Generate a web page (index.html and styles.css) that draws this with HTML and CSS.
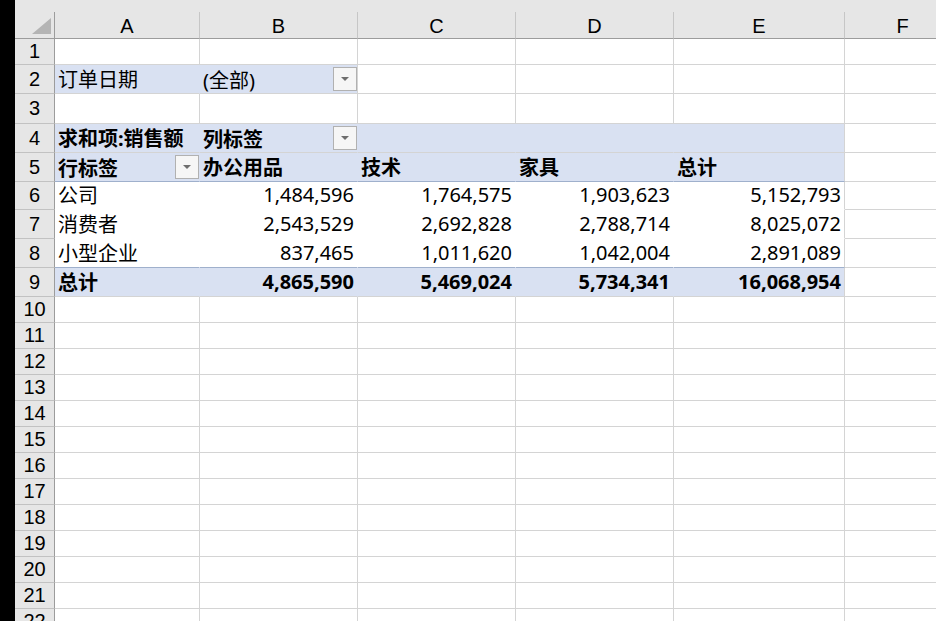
FILE: index.html
```html
<!DOCTYPE html>
<html lang="zh-CN">
<head>
    <meta charset="UTF-8">
    <title>数据透视表</title>
    <link rel="stylesheet" href="styles.css">
</head>
<body>
    <div class="app">
        <div class="strip"></div>

        <div class="sheet">
            <div class="topbar"></div>

            <!-- 列标题 -->
            <div class="row head">
                <div class="corner"><span class="tri"></span></div>
                <div>A</div><div>B</div><div>C</div><div>D</div><div>E</div><div>F</div>
            </div>

            <div class="row h26">
                <div class="rh">1</div><div></div><div></div><div></div><div></div><div></div><div></div>
            </div>

            <!-- 筛选字段 -->
            <div class="row h29">
                <div class="rh">2</div>
                <div class="pv join">订单日期</div>
                <div class="pv has-dd">(全部)<span class="dd"></span></div>
                <div></div><div></div><div></div><div></div>
            </div>

            <div class="row h30">
                <div class="rh">3</div><div></div><div></div><div></div><div></div><div></div><div></div>
            </div>

            <!-- 透视表 -->
            <div class="row h29">
                <div class="rh">4</div>
                <div class="pv join b">求和项:销售额</div>
                <div class="pv join b has-dd">列标签<span class="dd"></span></div>
                <div class="pv join"></div>
                <div class="pv join"></div>
                <div class="pv"></div>
                <div></div>
            </div>

            <div class="row h29">
                <div class="rh">5</div>
                <div class="pv join line b has-dd">行标签<span class="dd"></span></div>
                <div class="pv join line b">办公用品</div>
                <div class="pv join line b">技术</div>
                <div class="pv join line b">家具</div>
                <div class="pv line b">总计</div>
                <div></div>
            </div>

            <div class="row h28">
                <div class="rh">6</div>
                <div class="dt join">公司</div>
                <div class="dt join num">1,484,596</div>
                <div class="dt join num">1,764,575</div>
                <div class="dt join num">1,903,623</div>
                <div class="dt num">5,152,793</div>
                <div></div>
            </div>

            <div class="row h29">
                <div class="rh">7</div>
                <div class="dt join">消费者</div>
                <div class="dt join num">2,543,529</div>
                <div class="dt join num">2,692,828</div>
                <div class="dt join num">2,788,714</div>
                <div class="dt num">8,025,072</div>
                <div></div>
            </div>

            <div class="row h29">
                <div class="rh">8</div>
                <div class="dt join line">小型企业</div>
                <div class="dt join line num">837,465</div>
                <div class="dt join line num">1,011,620</div>
                <div class="dt join line num">1,042,004</div>
                <div class="dt line num">2,891,089</div>
                <div></div>
            </div>

            <div class="row h29">
                <div class="rh">9</div>
                <div class="pv join b">总计</div>
                <div class="pv join b num">4,865,590</div>
                <div class="pv join b num">5,469,024</div>
                <div class="pv join b num">5,734,341</div>
                <div class="pv b num">16,068,954</div>
                <div></div>
            </div>

            <!-- 空白行 -->
            <div class="row h26"><div class="rh">10</div><div></div><div></div><div></div><div></div><div></div><div></div></div>
            <div class="row h26"><div class="rh">11</div><div></div><div></div><div></div><div></div><div></div><div></div></div>
            <div class="row h26"><div class="rh">12</div><div></div><div></div><div></div><div></div><div></div><div></div></div>
            <div class="row h26"><div class="rh">13</div><div></div><div></div><div></div><div></div><div></div><div></div></div>
            <div class="row h26"><div class="rh">14</div><div></div><div></div><div></div><div></div><div></div><div></div></div>
            <div class="row h26"><div class="rh">15</div><div></div><div></div><div></div><div></div><div></div><div></div></div>
            <div class="row h26"><div class="rh">16</div><div></div><div></div><div></div><div></div><div></div><div></div></div>
            <div class="row h26"><div class="rh">17</div><div></div><div></div><div></div><div></div><div></div><div></div></div>
            <div class="row h26"><div class="rh">18</div><div></div><div></div><div></div><div></div><div></div><div></div></div>
            <div class="row h26"><div class="rh">19</div><div></div><div></div><div></div><div></div><div></div><div></div></div>
            <div class="row h26"><div class="rh">20</div><div></div><div></div><div></div><div></div><div></div><div></div></div>
            <div class="row h26"><div class="rh">21</div><div></div><div></div><div></div><div></div><div></div><div></div></div>
            <div class="row h26"><div class="rh">22</div><div></div><div></div><div></div><div></div><div></div><div></div></div>
        </div>
    </div>
</body>
</html>
```

FILE: styles.css
```css
html, body {
    margin: 0;
    height: 100%;
    overflow: hidden;
}

body {
    font-family: "Noto Sans", "Noto Sans CJK SC", sans-serif;
    font-size: 20px;
    color: #000;
    background: #fff;
}

.app {
    display: flex;
    height: 100vh;
}

.strip {
    width: 15px;
    flex: none;
    background: #000;
}

.sheet {
    flex: 1;
    overflow: hidden;
    background: #fff;
}

.topbar {
    height: 12px;
    background: #e6e6e6;
}

/* 行与单元格 */
.row {
    display: grid;
    grid-template-columns: 40px 145px 158px 158px 158px 171px 116px;
}

    .row > div {
        box-sizing: border-box;
        border-right: 1px solid #d4d4d4;
        border-bottom: 1px solid #d4d4d4;
        display: flex;
        align-items: center;
        padding: 0 3px 2px 3px;
        white-space: nowrap;
        overflow: hidden;
    }

.h26 { height: 26px; }
.h28 { height: 28px; }
.h29 { height: 29px; }
.h30 { height: 30px; }

/* 列标题 */
.head {
    height: 27px;
}

    .head > div {
        background: #e6e6e6;
        border-right-color: #c6c6c6;
        border-bottom-color: #9c9c9c;
        justify-content: center;
        font-family: "Liberation Sans", Arial, sans-serif;
        padding: 2px 0 0 0;
    }

    .head > .corner {
        border-right-color: #9c9c9c;
        justify-content: flex-end;
        align-items: flex-end;
        padding: 0 3px 4px 0;
    }

.tri {
    width: 0;
    height: 0;
    border-left: 19px solid transparent;
    border-bottom: 16px solid #b4b4b4;
}

/* 行号 */
.row > .rh {
    background: #e6e6e6;
    border-right-color: #9c9c9c;
    border-bottom-color: #c2c2c2;
    justify-content: center;
    font-family: "Liberation Sans", Arial, sans-serif;
    padding: 0;
}

/* 透视表样式 */
.row > .pv {
    background: #d9e1f2;
}

.row > .dt {
    background: #fff;
    border-bottom-color: #fff;
}

.row > .join {
    border-right-color: transparent;
}

.row > .pv.join {
    border-right-color: #d9e1f2;
}

.row > .line {
    border-bottom-color: #9fb0cc;
}

.b {
    font-weight: bold;
}

.num {
    justify-content: flex-end;
}

.row > .has-dd {
    justify-content: space-between;
    padding-right: 0;
    padding-bottom: 0;
}

.dd {
    width: 24px;
    height: 24px;
    box-sizing: border-box;
    border: 1px solid #b1b1b1;
    background: #f6f6f6;
    display: flex;
    align-items: center;
    justify-content: center;
}

    .dd::before {
        content: "";
        border-left: 4px solid transparent;
        border-right: 4px solid transparent;
        border-top: 4px solid #6e6e6e;
    }
```
